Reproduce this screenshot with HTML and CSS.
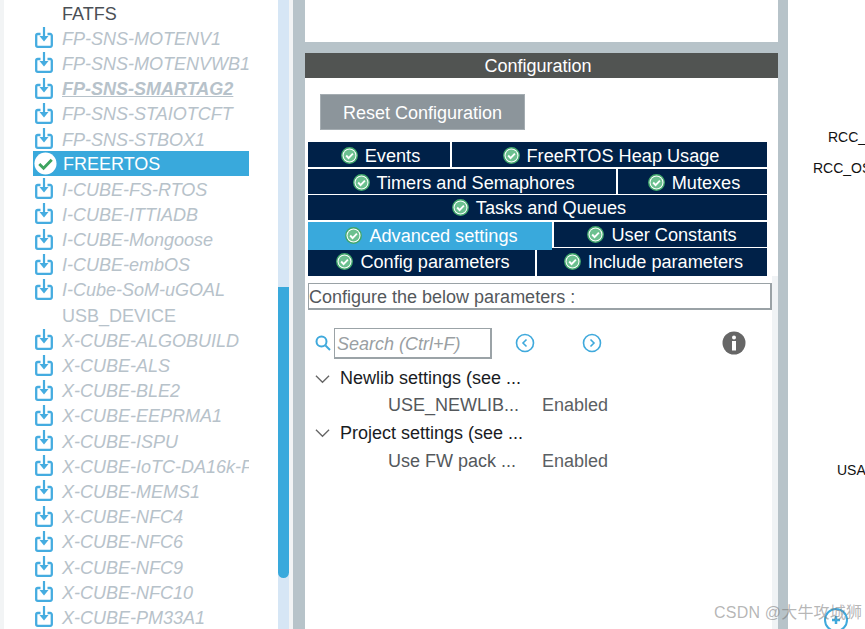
FILE: index.html
```html
<!DOCTYPE html>
<html lang="en">
<head>
<meta charset="utf-8">
<title>Configuration</title>
<link rel="stylesheet" href="styles.css">
</head>
<body>
<svg class="defs" width="0" height="0">
  <symbol id="dl" viewBox="0 0 18 21">
    <path d="M5.500 7H2.800a1.600 1.600 0 0 0-1.600 1.600v9.600a1.600 1.600 0 0 0 1.600 1.600h12.400a1.600 1.600 0 0 0 1.600-1.600V8.600a1.600 1.600 0 0 0-1.600-1.600H12.500" fill="none" stroke="#45ace0" stroke-width="2.300"/>
    <path d="M9 0v11" fill="none" stroke="#45ace0" stroke-width="2.200"/>
    <path d="M4.500 9h9L9 14.500z" fill="#45ace0"/>
  </symbol>
  <symbol id="ok" viewBox="0 0 18 18">
    <circle cx="9" cy="9" r="8.200" fill="#fff" stroke="#3fa66b" stroke-width="1.500"/>
    <circle cx="9" cy="9" r="6.300" fill="#6cc08f"/>
    <path d="M5.500 9l2.500 2.700 4.600-4.700" fill="none" stroke="#fff" stroke-width="2"/>
  </symbol>
</svg>
<div class="screen">
  <aside class="sidebar">
    <ul class="list">
      <li class="item plain">FATFS</li>
      <li class="item"><svg class="dl"><use href="#dl"/></svg>FP-SNS-MOTENV1</li>
      <li class="item"><svg class="dl"><use href="#dl"/></svg>FP-SNS-MOTENVWB1</li>
      <li class="item strong"><svg class="dl"><use href="#dl"/></svg><u>FP-SNS-SMARTAG2</u></li>
      <li class="item"><svg class="dl"><use href="#dl"/></svg>FP-SNS-STAIOTCFT</li>
      <li class="item"><svg class="dl"><use href="#dl"/></svg>FP-SNS-STBOX1</li>
      <li class="item selected">
        <svg class="big-ok" viewBox="0 0 24 24"><circle cx="12" cy="12" r="11.500" fill="#fff"/><path d="M5.500 12.500l4.500 4.500 8.500-9" fill="none" stroke="#3ea45f" stroke-width="3"/></svg>FREERTOS</li>
      <li class="item"><svg class="dl"><use href="#dl"/></svg>I-CUBE-FS-RTOS</li>
      <li class="item"><svg class="dl"><use href="#dl"/></svg>I-CUBE-ITTIADB</li>
      <li class="item"><svg class="dl"><use href="#dl"/></svg>I-CUBE-Mongoose</li>
      <li class="item"><svg class="dl"><use href="#dl"/></svg>I-CUBE-embOS</li>
      <li class="item"><svg class="dl"><use href="#dl"/></svg>I-Cube-SoM-uGOAL</li>
      <li class="item plain dim">USB_DEVICE</li>
      <li class="item"><svg class="dl"><use href="#dl"/></svg>X-CUBE-ALGOBUILD</li>
      <li class="item"><svg class="dl"><use href="#dl"/></svg>X-CUBE-ALS</li>
      <li class="item"><svg class="dl"><use href="#dl"/></svg>X-CUBE-BLE2</li>
      <li class="item"><svg class="dl"><use href="#dl"/></svg>X-CUBE-EEPRMA1</li>
      <li class="item"><svg class="dl"><use href="#dl"/></svg>X-CUBE-ISPU</li>
      <li class="item"><svg class="dl"><use href="#dl"/></svg><span class="clip">X-CUBE-IoTC-DA16k-PMOD</span></li>
      <li class="item"><svg class="dl"><use href="#dl"/></svg>X-CUBE-MEMS1</li>
      <li class="item"><svg class="dl"><use href="#dl"/></svg>X-CUBE-NFC4</li>
      <li class="item"><svg class="dl"><use href="#dl"/></svg>X-CUBE-NFC6</li>
      <li class="item"><svg class="dl"><use href="#dl"/></svg>X-CUBE-NFC9</li>
      <li class="item"><svg class="dl"><use href="#dl"/></svg>X-CUBE-NFC10</li>
      <li class="item"><svg class="dl"><use href="#dl"/></svg>X-CUBE-PM33A1</li>
    </ul>
    <div class="track"><div class="thumb"></div></div>
  </aside>

  <div class="gutter-left"></div>

  <main class="center">
    <div class="top-blank"></div>
    <div class="band"></div>
    <h2 class="title">Configuration</h2>
    <div class="reset-wrap"><button class="reset">Reset Configuration</button></div>
    <div class="tabs">
      <div class="tab-row r1">
        <div class="tab w143"><svg class="ok"><use href="#ok"/></svg>Events</div>
        <div class="tab grow"><svg class="ok"><use href="#ok"/></svg>FreeRTOS Heap Usage</div>
      </div>
      <div class="tab-row r2">
        <div class="tab w308"><svg class="ok"><use href="#ok"/></svg>Timers and Semaphores</div>
        <div class="tab grow"><svg class="ok"><use href="#ok"/></svg>Mutexes</div>
      </div>
      <div class="tab-row r3">
        <div class="tab grow"><svg class="ok"><use href="#ok"/></svg>Tasks and Queues</div>
      </div>
      <div class="tab-row r4">
        <div class="tab w244 active"><svg class="ok"><use href="#ok"/></svg>Advanced settings</div>
        <div class="tab grow"><svg class="ok"><use href="#ok"/></svg>User Constants</div>
      </div>
      <div class="tab-row r5">
        <div class="tab w227"><svg class="ok"><use href="#ok"/></svg>Config parameters</div>
        <div class="tab grow"><svg class="ok"><use href="#ok"/></svg>Include parameters</div>
      </div>
    </div>
    <div class="pane">
      <div class="hint">Configure the below parameters :</div>
      <div class="toolbar">
        <svg class="search-icon" viewBox="0 0 16 16"><circle cx="6.500" cy="6.500" r="5" fill="none" stroke="#3fa9dc" stroke-width="2"/><path d="M10.500 10.500l4.500 4.500" stroke="#3fa9dc" stroke-width="2"/></svg>
        <div class="search">Search (Ctrl+F)</div>
        <svg class="nav first" viewBox="0 0 20 20"><circle cx="10" cy="10" r="8.500" fill="none" stroke="#3fa9dc" stroke-width="1.600"/><path d="M11.500 6.500L8 10l3.500 3.500" fill="none" stroke="#3fa9dc" stroke-width="1.600"/></svg>
        <svg class="nav second" viewBox="0 0 20 20"><circle cx="10" cy="10" r="8.500" fill="none" stroke="#3fa9dc" stroke-width="1.600"/><path d="M8.500 6.500L12 10l-3.500 3.500" fill="none" stroke="#3fa9dc" stroke-width="1.600"/></svg>
        <svg class="info" viewBox="0 0 24 24"><circle cx="12" cy="12" r="11.500" fill="#666"/><circle cx="12" cy="6.500" r="2" fill="#fff"/><rect x="10" y="10" width="4" height="9.500" fill="#fff"/></svg>
      </div>
      <div class="tree">
        <div class="group"><svg class="chev" viewBox="0 0 16 10"><path d="M1 1.500l7 7 7-7" fill="none" stroke="#666" stroke-width="1.400"/></svg>Newlib settings (see ...</div>
        <div class="param"><span class="key">USE_NEWLIB...</span><span class="val">Enabled</span></div>
        <div class="group"><svg class="chev" viewBox="0 0 16 10"><path d="M1 1.500l7 7 7-7" fill="none" stroke="#666" stroke-width="1.400"/></svg>Project settings (see ...</div>
        <div class="param"><span class="key">Use FW pack ...</span><span class="val">Enabled</span></div>
      </div>
    </div>
  </main>

  <div class="gutter-right"></div>

  <section class="canvas">
    <span class="pin pin-a">RCC_OSC_IN</span>
    <span class="pin pin-b">RCC_OSC_OUT</span>
    <span class="pin pin-c">USART2_TX</span>
    <svg class="zoom-in" viewBox="0 0 24 24"><circle cx="12" cy="12" r="11" fill="#fff" stroke="#3fa9dc" stroke-width="2"/><path d="M8 12h8M12 8v8" stroke="#3fa9dc" stroke-width="2.500"/></svg>
  </section>

  <div class="watermark">CSDN @大牛攻城狮</div>
</div>
</body>
</html>
```
FILE: styles.css
```css
* { box-sizing: border-box; }
html, body { margin: 0; padding: 0; height: 100%; background: #fff; overflow: hidden; }
body { font-family: "Liberation Sans", Arial, sans-serif; font-size: 18px; }
.defs { position: absolute; }
.screen { position: relative; display: flex; width: 865px; height: 629px; overflow: hidden; }

/* sidebar */
.sidebar { display: flex; width: 289px; height: 629px; flex: none; border-left: 4px solid #f2f4f5; }
.list { list-style: none; margin: 0; padding: 0 0 0 29px; width: 274px; flex: none; overflow: hidden; }
.item { display: flex; align-items: center; width: 216px; height: 25.2px; padding-top: 3px; white-space: nowrap; color: #b7c2ca; font-style: italic; font-size: 18px; line-height: 25px; }
.item.plain { padding-left: 29px; color: #4a4f55; font-style: normal; }
.item.plain.dim { color: #b7c2ca; }
.item.strong { font-weight: bold; }
.item.selected { background: #39a9dc; color: #fff; font-style: normal; height: 25px; padding: 2px 0 0 1px; }
.dl { width: 18px; height: 21px; margin: 0 9px 3px 2px; flex: none; }
.big-ok { width: 23px; height: 23px; margin: 0 6px 2px 0; flex: none; }
.clip { display: block; width: 187px; overflow: hidden; }
.track { position: relative; width: 11px; height: 629px; background: #d6e6f5; flex: none; }
.thumb { position: absolute; left: 0; top: 287px; width: 11px; height: 291px; background: #39a9dc; border-radius: 0 0 6px 6px; }

.gutter-left { width: 16px; flex: none; background: linear-gradient(to right, #f2f4f5 4px, #b7c3c9 4px); }
.gutter-right { width: 10px; flex: none; background: #b7c3c9; }

/* center */
.center { width: 473px; flex: none; background: #fff; display: flex; flex-direction: column; }
.top-blank { height: 42px; }
.band { height: 11px; background: #b7c3c9; }
.title { margin: 0; height: 25px; line-height: 27px; background: #515452; color: #fff; font-size: 18px; font-weight: normal; text-align: center; padding-right: 7px; }
.reset-wrap { padding: 16px 0 12px 15px; }
.reset { display: block; width: 205px; height: 36px; padding: 2px 0 0; border: 1px solid #a5adb2; background: #8c959b; color: #fff; font: 18px "Liberation Sans", Arial, sans-serif; }
.tabs { display: flex; flex-direction: column; gap: 2px; padding-left: 3px; width: 462px; }
.tab-row { display: flex; gap: 2px; height: 25px; }
.tab { display: flex; align-items: center; justify-content: center; padding-left: 3px; background: #002148; color: #fff; font-size: 18.15px; white-space: nowrap; }
.tab.grow { flex: 1; }
.r1 .tab, .r2 .tab { padding-top: 3px; }
.r3 { margin-top: -1px; }
.r3 .tab { padding-top: 2px; }
.r4 .tab.grow { padding-top: 2px; }
.r5 { margin-top: -1px; height: 28px; }
.r5 .tab { padding-top: 1px; }
.w143 { width: 142px; flex: none; }
.w308 { width: 308px; flex: none; }
.w244 { width: 244px; flex: none; }
.w227 { width: 227px; flex: none; }
.tab.active { background: #39a9dc; height: 28px; position: relative; z-index: 1; }
.ok { width: 17px; height: 17px; margin: 0 7px 2px 0; flex: none; }

.pane { position: relative; flex: 1; padding: 7px 0 0 3px; background: linear-gradient(to right, #fff 467px, #f0f3f5 467px); }
.hint { width: 464px; height: 27px; border: 2px solid #a9b0b4; border-width: 1px 2px 2px 1px; border-color: #9aa2a6; background: #fff; color: #54585c; font-size: 18px; line-height: 26px; }
.toolbar { display: flex; align-items: center; height: 32px; margin-top: 17px; padding-left: 7px; }
.search-icon { width: 16px; height: 16px; flex: none; }
.search { width: 158px; height: 31px; margin-left: 3px; border: 2px solid #9ba3a7; border-width: 1px 2px 2px 1px; color: #9a9fa3; font-style: italic; font-size: 18px; line-height: 30px; padding-left: 2px; white-space: nowrap; }
.nav { width: 20px; height: 20px; flex: none; }
.nav.first { margin-left: 23px; }
.nav.second { margin-left: 47px; }
.info { width: 24px; height: 24px; flex: none; margin-left: 120px; }
.tree { padding: 5px 0 0 7px; }
.group { display: flex; align-items: center; height: 28px; color: #1a1c1f; font-size: 18px; white-space: nowrap; }
.group:first-child { height: 27px; padding-top: 2px; }
.chev { width: 15px; height: 10px; margin-right: 10px; flex: none; }
.param { display: flex; height: 28px; align-items: center; padding-left: 73px; font-size: 18px; color: #54585c; white-space: nowrap; }
.key { width: 154px; flex: none; }
.val { color: #5b6064; }

/* right canvas */
.canvas { position: relative; flex: 1; background: #fff; font-size: 14px; color: #111; }
.pin { position: absolute; white-space: nowrap; line-height: 16px; }
.pin-a { left: 40px; top: 129px; }
.pin-b { left: 25px; top: 160px; }
.pin-c { left: 49px; top: 462px; }
.zoom-in { position: absolute; left: 36px; top: 608px; width: 24px; height: 24px; }
.watermark { position: absolute; left: 714px; top: 603px; font-family: "Liberation Sans", "Noto Sans CJK SC", sans-serif; font-size: 16px; line-height: 20px; color: rgba(120,120,120,.55); white-space: nowrap; letter-spacing: .2px; }
```
